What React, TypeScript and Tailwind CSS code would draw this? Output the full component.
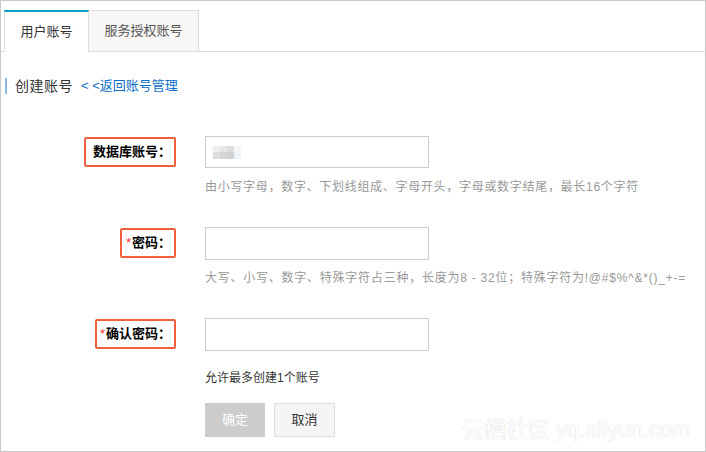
import React from "react";

const font = { fontFamily: '"Liberation Sans", "Noto Sans CJK SC", sans-serif' };

function Label({ text, required, w }: { text: string; required?: boolean; w: string }) {
  return (
    <div className="flex justify-end pr-[1px]">
      <div className={`${w} h-[30px] border-2 border-[#f0603e] rounded-[2px] flex items-center justify-end pr-[3px] text-[13px] font-bold text-black whitespace-nowrap shrink-0`}>
        {required && <span className="text-[#ff2a2a] font-normal mr-[1px]">*</span>}
        <span>{text}</span>
      </div>
    </div>
  );
}

export default function App() {
  return (
    <div className="w-[706px] h-[452px] border border-[#c8c8c8] bg-white relative overflow-hidden" style={font}>
      {/* Tabs */}
      <div className="pt-[9px] pl-[3px] border-b border-[#dddddd] flex h-[51px]">
        <div className="w-[85px] h-[42px] -mb-px bg-white border-t-2 border-t-[#00a2ca] border-l border-r border-[#dddddd] flex items-center justify-center text-[13px] text-[#333]">
          用户账号
        </div>
        <div className="w-[110px] h-[41px] bg-[#f8f7f5] border-t border-r border-[#dddddd] flex items-center justify-center text-[13px] text-[#555]">
          服务授权账号
        </div>
      </div>

      {/* Heading */}
      <div className="mt-[24px] flex items-center h-[20px] pl-[4px]">
        <div className="w-[2px] h-[16px] bg-[#8cb9e3]" />
        <span className="ml-[8px] text-[14px] text-[#333] tracking-[0.5px]">创建账号</span>
        <span className="ml-[8px] text-[13px] text-[#0a6fc8]">&lt; &lt;返回账号管理</span>
      </div>

      {/* Form */}
      <div className="mt-[40px] grid grid-cols-[176px_1fr] gap-x-[28px]">
        <div className="h-[32px] flex items-center justify-end">
          <Label text="数据库账号：" w="w-[92px]" />
        </div>
        <div>
          <div className="w-[224px] h-[32px] border border-[#cccccc] flex items-center pl-[7px]">
            <div className="grid grid-cols-[7px_7px_7px_7px] grid-rows-[6px_7px]">
              <div className="bg-[#eeeeee]" />
              <div className="bg-[#e6e6e6]" />
              <div className="bg-[#dedede]" />
              <div className="bg-[#f2f6f9]" />
              <div className="bg-[#e0dcdc]" />
              <div className="bg-[#d6d4d4]" />
              <div className="bg-[#d2d2d2]" />
              <div className="bg-[#eef3f8]" />
            </div>
          </div>
          <div className="mt-[10px] h-[18px] leading-[18px] text-[12px] text-[#999] whitespace-nowrap tracking-[0.7px]">
            由小写字母，数字、下划线组成、字母开头，字母或数字结尾，最长16个字符
          </div>
        </div>

        <div className="mt-[31px] h-[32px] flex items-center justify-end">
          <Label text="密码：" required w="w-[56px]" />
        </div>
        <div className="mt-[31px]">
          <div className="w-[224px] h-[33px] border border-[#cccccc]" />
          <div className="mt-[9px] h-[18px] leading-[18px] text-[12px] text-[#999] whitespace-nowrap tracking-[0.76px]">
            大写、小写、数字、特殊字符占三种，长度为8 - 32位；特殊字符为!@#$%^&amp;*()_+-=
          </div>
        </div>

        <div className="mt-[31px] h-[32px] flex items-center justify-end">
          <Label text="确认密码：" required w="w-[81px]" />
        </div>
        <div className="mt-[31px]">
          <div className="w-[224px] h-[33px] border border-[#cccccc]" />
          <div className="mt-[18px] h-[18px] leading-[18px] text-[12px] text-[#333] whitespace-nowrap">
            允许最多创建1个账号
          </div>
          <div className="mt-[16px] flex gap-[9px]">
            <div className="w-[60px] h-[34px] bg-[#cccccc] text-white text-[13px] flex items-center justify-center">确定</div>
            <div className="w-[61px] h-[34px] bg-[#f5f5f5] border border-[#dddddd] text-[#333] text-[13px] flex items-center justify-center">取消</div>
          </div>
        </div>
      </div>

      {/* Watermark */}
      <div
        className="absolute left-[461px] top-[412px] text-[22px] text-white whitespace-nowrap"
        style={{ textShadow: "0 0 1px #d4d4d4, 0 0 1px #dddddd" }}
      >
        云栖社区 yq.aliyun.com
      </div>
    </div>
  );
}
